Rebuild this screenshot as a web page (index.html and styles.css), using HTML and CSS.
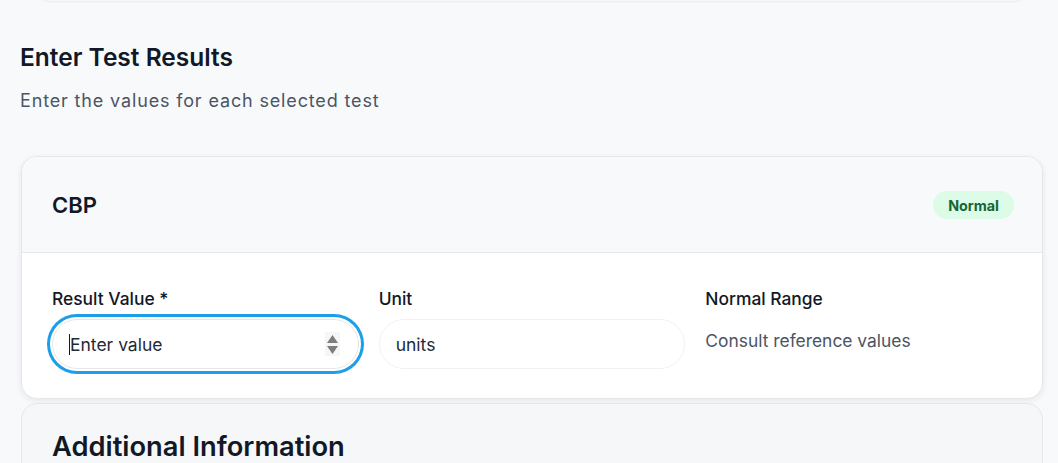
FILE: index.html
```html
<!DOCTYPE html>
<html lang="en">
<head>
<meta charset="utf-8">
<title>Enter Test Results</title>
<link rel="stylesheet" href="styles.css">
</head>
<body>
<div class="page">
  <div class="prev-card"></div>
  <section class="section">
    <h2 class="section-title">Enter Test Results</h2>
    <p class="section-sub">Enter the values for each selected test</p>
  </section>
  <div class="stack">
    <div class="card">
      <div class="card-head">
        <h3 class="test-name">CBP</h3>
        <span class="badge">Normal</span>
      </div>
      <div class="card-body">
        <div class="field">
          <label class="label">Result Value *</label>
          <div class="input-wrap focused">
            <span class="caret"></span>
            <input class="input" type="text" placeholder="Enter value">
            <span class="spinner">
              <svg width="13" height="20" viewBox="0 0 13 20"><path d="M6.5 1 L12 9 L1 9 Z" fill="#7d7d7d"/><path d="M1 12 L12 12 L6.5 20 Z" fill="#7d7d7d"/></svg>
            </span>
          </div>
        </div>
        <div class="field">
          <label class="label">Unit</label>
          <div class="input-wrap">
            <input class="input" type="text" value="units">
          </div>
        </div>
        <div class="field">
          <label class="label">Normal Range</label>
          <p class="range">Consult reference values</p>
        </div>
      </div>
    </div>
    <div class="card card-muted">
      <h3 class="card-title">Additional Information</h3>
    </div>
  </div>
</div>
</body>
</html>
```

FILE: styles.css
```css
* { box-sizing: border-box; }
html, body { margin: 0; padding: 0; }
body {
  background: #f8f9fb;
  font-family: Inter, "Noto Sans", "Liberation Sans", sans-serif;
  color: #111827;
  overflow: hidden;
}
.page {
  padding: 0 15px 0 21px;
  width: 1058px;
}
.prev-card {
  height: 40px;
  margin: -39px 14px 0 14px;
  border-radius: 16px;
  background: #f8f9fb;
  box-shadow: 0 1px 2px rgba(0,0,0,0.06);
}
.section {
  padding: 40px 0 0 0;
  margin-left: -1px;
}
.section-title {
  margin: 0;
  font-size: 24.5px;
  line-height: 32px;
  font-weight: 600;
  color: #111827;
}
.section-sub {
  margin: 14px 0 0 0;
  font-size: 18px;
  line-height: 28px;
  letter-spacing: 0.85px;
  color: #4b5563;
}
.stack {
  margin-top: 41px;
  display: flex;
  flex-direction: column;
  gap: 4px;
}
.card {
  background: #fff;
  border: 1px solid #e5e7eb;
  border-radius: 16px;
  overflow: hidden;
  box-shadow: 0 2px 6px rgba(15, 23, 42, 0.08);
}
.card-head {
  display: flex;
  align-items: center;
  justify-content: space-between;
  padding: 34px 30px 33px 30px;
  background: #f8f9fb;
  border-bottom: 1px solid #e5e7eb;
}
.test-name {
  margin: 0;
  font-size: 22px;
  line-height: 28px;
  font-weight: 600;
  color: #111827;
}
.badge {
  display: inline-flex;
  align-items: center;
  height: 28px;
  padding: 0 15px;
  border-radius: 999px;
  background: #dcfce7;
  color: #166534;
  font-size: 14.3px;
  font-weight: 700;
  margin-right: -2px;
}
.card-body {
  display: grid;
  grid-template-columns: repeat(3, minmax(0, 1fr));
  column-gap: 20px;
  padding: 34px 30px 29px 30px;
}
.field {
  display: flex;
  flex-direction: column;
  min-width: 0;
}
.label {
  font-size: 17.4px;
  line-height: 24px;
  font-weight: 500;
  color: #111827;
}
.input-wrap {
  margin-top: 8px;
  height: 50px;
  display: flex;
  align-items: center;
  padding: 0 16px;
  border: 1px solid #f1f2f4;
  border-radius: 999px;
  background: #fff;
}
.input-wrap.focused {
  border-color: #e5e7eb;
  box-shadow: 0 0 0 2px #fff, 0 0 0 5px #1d9ee9;
}
.caret {
  width: 1px;
  height: 21px;
  background: #111827;
  flex: none;
}
.input {
  flex: 1;
  min-width: 0;
  width: 100%;
  border: 0;
  outline: 0;
  background: transparent;
  padding: 0;
  font-family: inherit;
  font-size: 17.5px;
  color: #1f2937;
}
.input::placeholder {
  color: #1f2937;
  opacity: 1;
}
.spinner {
  flex: none;
  display: flex;
  align-items: center;
  justify-content: center;
  width: 15px;
  height: 24px;
  background: #f6f6f6;
  margin-right: 2px;
}
.range {
  margin: 18px 0 0 0;
  font-size: 17.4px;
  line-height: 24px;
  color: #4b5563;
}
.card-muted {
  background: #f6f7f8;
  box-shadow: none;
  padding: 25px 30px 40px 30px;
}
.card-title {
  margin: 0;
  font-size: 27.3px;
  line-height: 36px;
  font-weight: 600;
  color: #111827;
}
```
